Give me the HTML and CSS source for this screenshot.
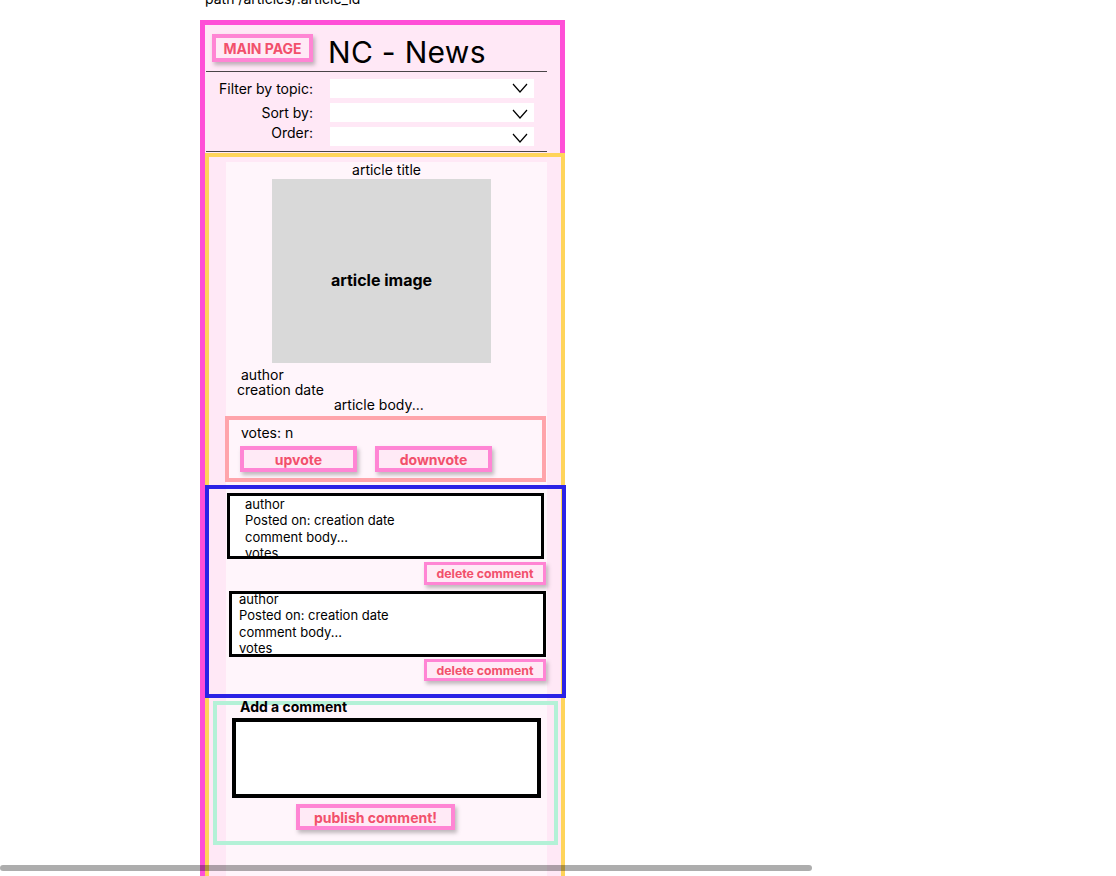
FILE: index.html
```html
<!DOCTYPE html>
<html lang="en">
<head>
<meta charset="utf-8">
<title>NC - News article</title>
<link rel="stylesheet" href="styles.css">
</head>
<body>
<div class="page">
  <p class="path">path /articles/:article_id</p>
  <div class="frame">
    <header class="header">
      <div class="top">
        <button class="btn btn-main">MAIN PAGE</button>
        <h1 class="title">NC - News</h1>
      </div>
      <div class="rule"></div>
      <div class="filters">
        <div class="frow">
          <span class="flabel">Filter by topic:</span>
          <div class="select"><svg class="chev" width="16" height="10" viewBox="0 0 16 10"><polyline points="1,1 8,9 15,1" fill="none" stroke="#000" stroke-width="1.2"/></svg></div>
        </div>
        <div class="frow">
          <span class="flabel">Sort by:</span>
          <div class="select"><svg class="chev low" width="16" height="10" viewBox="0 0 16 10"><polyline points="1,1 8,9 15,1" fill="none" stroke="#000" stroke-width="1.2"/></svg></div>
        </div>
        <div class="frow">
          <span class="flabel up">Order:</span>
          <div class="select"><svg class="chev low" width="16" height="10" viewBox="0 0 16 10"><polyline points="1,1 8,9 15,1" fill="none" stroke="#000" stroke-width="1.2"/></svg></div>
        </div>
      </div>
      <div class="rule rule-bottom"></div>
    </header>
    <section class="article-frame">
      <div class="sheet">
        <h2 class="atitle">article title</h2>
        <div class="img">article image</div>
        <p class="meta meta-author">author</p>
        <p class="meta meta-date">creation date</p>
        <p class="meta meta-body">article body...</p>
        <div class="votes">
          <p class="votes-count">votes: n</p>
          <div class="vote-btns">
            <button class="btn btn-vote">upvote</button>
            <button class="btn btn-vote">downvote</button>
          </div>
        </div>
        <div class="comments">
          <div class="comment c1">
            <p>author</p>
            <p>Posted on: creation date</p>
            <p>comment body...</p>
            <p>votes</p>
          </div>
          <button class="btn btn-del d1">delete comment</button>
          <div class="comment c2">
            <div class="ctext">
              <p>author</p>
              <p>Posted on: creation date</p>
              <p>comment body...</p>
              <p>votes</p>
            </div>
          </div>
          <button class="btn btn-del d2">delete comment</button>
        </div>
        <div class="add">
          <p class="add-title">Add a comment</p>
          <div class="textbox"></div>
          <button class="btn btn-pub">publish comment!</button>
        </div>
      </div>
    </section>
  </div>
</div>
<div class="hscroll"></div>
</body>
</html>
```

FILE: styles.css
```css
* { box-sizing: border-box; }
html, body { margin: 0; padding: 0; overflow: hidden; height: 876px; background: #fff; }
body { font-family: Inter, "Noto Sans", sans-serif; color: #000; font-size: 14px; }
p { margin: 0; }

.page { margin-left: 200px; width: 366px; }
.path { margin: -10px 0 0 5px; height: 30px; line-height: 17px; font-size: 14px; }

.frame {
  width: 365px;
  border: 5px solid #ff4fd7;
  border-bottom: 0;
  background: #ffe8f6;
  min-height: 900px;
}

.top { display: flex; align-items: flex-start; height: 46px; padding: 9px 0 0 7px; }
.btn {
  font-family: Inter, "Noto Sans", sans-serif;
  font-weight: 700;
  color: #f2506c;
  background: #ffeaf6;
  border: 4px solid #ff85d4;
  box-shadow: 2px 3px 4px rgba(0, 0, 0, 0.25);
  padding: 0;
  display: flex;
  align-items: center;
  justify-content: center;
}
.btn-main { width: 101px; height: 28px; font-size: 14px; }
.title { margin: 0 0 0 15px; font-size: 30px; font-weight: 400; line-height: 36px; letter-spacing: 0.3px; }

.rule { height: 1px; background: #4a4448; margin: 0 13px 0 1px; }
.rule-bottom { margin-top: 5px; }

.filters { display: flex; flex-direction: column; gap: 5px; padding-top: 7px; }
.frow { display: flex; align-items: center; }
.flabel { width: 108px; text-align: right; line-height: 17px; font-size: 14px; }
.flabel.up { position: relative; top: -4px; }
.select {
  margin-left: 17px;
  width: 204px;
  height: 19px;
  background: #fff;
  display: flex;
  align-items: center;
  justify-content: flex-end;
  padding-right: 6px;
}
.chev { display: block; margin-top: -2px; }
.chev.low { margin-top: 3px; }

.article-frame {
  margin-top: 1px;
  margin-right: -5px;
  border: 4px solid #ffd45a;
  border-bottom: 0;
  background: #ffe8f6;
  padding-top: 5px;
}
.sheet {
  background: linear-gradient(to right, #ffe8f6 0, #ffe8f6 17px, #fff5fb 17px, #fff5fb calc(100% - 14px), #ffe8f6 calc(100% - 14px));
  padding-bottom: 120px;
  display: flex;
  flex-direction: column;
  align-items: flex-start;
}
.atitle { margin: 0 14px 0 17px; align-self: stretch; text-align: center; font-size: 14px; font-weight: 400; line-height: 16px; }
.img {
  margin: 1px 0 0 63px;
  width: 219px;
  height: 184px;
  background: #d9d9d9;
  display: flex;
  align-items: center;
  justify-content: center;
  padding-top: 18px;
  font-weight: 700;
  font-size: 16px;
}
.meta { font-size: 14px; line-height: 15px; }
.meta-author { margin: 4px 0 0 32px; }
.meta-date { margin-left: 28px; }
.meta-body { margin-left: 125px; }

.votes {
  margin: 4px 15px 0 16px;
  align-self: stretch;
  border: 4px solid #ffa4ab;
  padding: 5px 0 6px 11px;
}
.votes-count { margin-left: 1px; line-height: 15px; font-size: 14px; }
.vote-btns { display: flex; gap: 18px; margin-top: 6px; }
.btn-vote { width: 117px; height: 26px; font-size: 14px; }

.comments {
  margin: 3px -5px 0 -4px;
  align-self: stretch;
  border: 4px solid #2b22e6;
  padding: 4px 0 13px;
  display: flex;
  flex-direction: column;
}
.comment {
  border: 3px solid #000;
  height: 66px;
  background: #fff;
  overflow: hidden;
  font-size: 13px;
  line-height: 16.3px;
}
.c1 { margin: 0 18px 0 18px; padding-left: 15px; }
.c2 { margin: 6px 16px 0 20px; padding-left: 7px; }
.ctext { margin-top: -3px; }
.btn-del { align-self: flex-end; width: 122px; font-size: 12.3px; border-width: 3px; margin-right: 16px; }
.d1 { height: 23px; margin-top: 3px; }
.d2 { height: 22px; margin-top: 2px; }

.add {
  margin: 3px 3px 0 4px;
  align-self: stretch;
  border: 4px solid #b4f1d7;
  padding: 0 0 11px;
}
.add-title { margin: -6px 0 0 23px; font-weight: 700; font-size: 14px; line-height: 16px; }
.textbox { margin: 3px 0 0 15px; width: 309px; height: 80px; border: 4px solid #000; background: #fff; }
.btn-pub { margin: 6px 0 0 79px; width: 159px; height: 26px; font-size: 14px; }

.hscroll {
  position: fixed;
  left: 0;
  bottom: 5px;
  width: 812px;
  height: 6px;
  border-radius: 3px;
  background: rgba(0, 0, 0, 0.32);
}
```
